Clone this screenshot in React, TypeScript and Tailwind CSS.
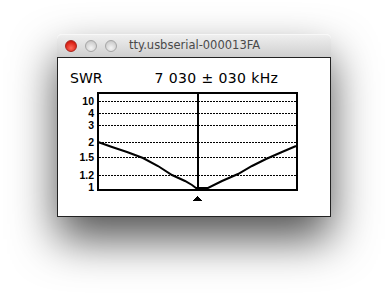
import React from "react";

const ticks: [string, number][] = [
  ["10", 101],
  ["4", 113],
  ["3", 125],
  ["2", 142],
  ["1.5", 157],
  ["1.2", 175],
  ["1", 187],
];

const dotted = [101, 113, 125, 142, 157, 175];

const curve =
  "98,142 112,147 127,152 143,158 158,166 172,175 185,181 192,185 196,188 208,188 222,181 238,174 252,166 266,159 282,152 296,146";

export default function App() {
  return (
    <div className="w-[388px] h-[296px] bg-white pt-[34px] pl-[57px] overflow-hidden">
      <div className="w-[274px] h-[183px] flex flex-col rounded-t-[5px] shadow-[0_22px_45px_rgba(0,0,0,0.68)]">
        <div className="h-[23px] rounded-t-[5px] bg-gradient-to-b from-[#efefef] to-[#cfcfcf] border-t border-[#f8f8f8] flex items-center pl-[8px]">
          <div className="flex gap-[8px]">
            <div className="w-[12px] h-[12px] rounded-full bg-[radial-gradient(circle_at_50%_70%,#ff6a5a,#d81e12_70%,#9b1a12)] border border-[#a8261e]" />
            <div className="w-[12px] h-[12px] rounded-full bg-[radial-gradient(circle_at_50%_70%,#f4f4f4,#cfcfcf_70%,#b8b8b8)] border border-[#a6a6a6]" />
            <div className="w-[12px] h-[12px] rounded-full bg-[radial-gradient(circle_at_50%_70%,#f4f4f4,#cfcfcf_70%,#b8b8b8)] border border-[#a6a6a6]" />
          </div>
          <span className="ml-[12px] text-[11.5px] leading-none text-[#4a4a4a] font-['DejaVu_Sans',sans-serif]">
            tty.usbserial-000013FA
          </span>
        </div>
        <div className="flex-1 bg-white border border-[#222] flex flex-col">
          <div className="mt-[12px] flex text-[14px] leading-[16px] text-black font-['DejaVu_Sans',sans-serif] pl-[12px]">
            <span>SWR</span>
            <span className="ml-[52px] tracking-[0.4px]">7 030 ± 030 kHz</span>
          </div>
          <svg
            width="240"
            height="118"
            viewBox="60 88 240 118"
            className="ml-[2px] mt-[2px] block"
            shapeRendering="crispEdges"
          >
            {dotted.map((y) => (
              <line
                key={y}
                x1={99}
                x2={296}
                y1={y + 0.5}
                y2={y + 0.5}
                stroke="#000"
                strokeWidth={1}
                strokeDasharray="2 1"
              />
            ))}
            <rect x={98} y={93} width={199} height={97} fill="none" stroke="#000" strokeWidth={2} />
            <line x1={198} x2={198} y1={92} y2={191} stroke="#000" strokeWidth={2} />
            <polyline points={curve} fill="none" stroke="#000" strokeWidth={2} shapeRendering="auto" />
            <polygon points="193,201 202,201 197.5,196" fill="#000" />
            {ticks.map(([t, y]) => (
              <text
                key={t}
                x={94}
                y={y}
                textAnchor="end"
                dominantBaseline="central"
                fontFamily="Liberation Sans, Arial, sans-serif"
                fontWeight="bold"
                fontSize="10.5"
                fill="#000"
              >
                {t}
              </text>
            ))}
          </svg>
        </div>
      </div>
    </div>
  );
}
